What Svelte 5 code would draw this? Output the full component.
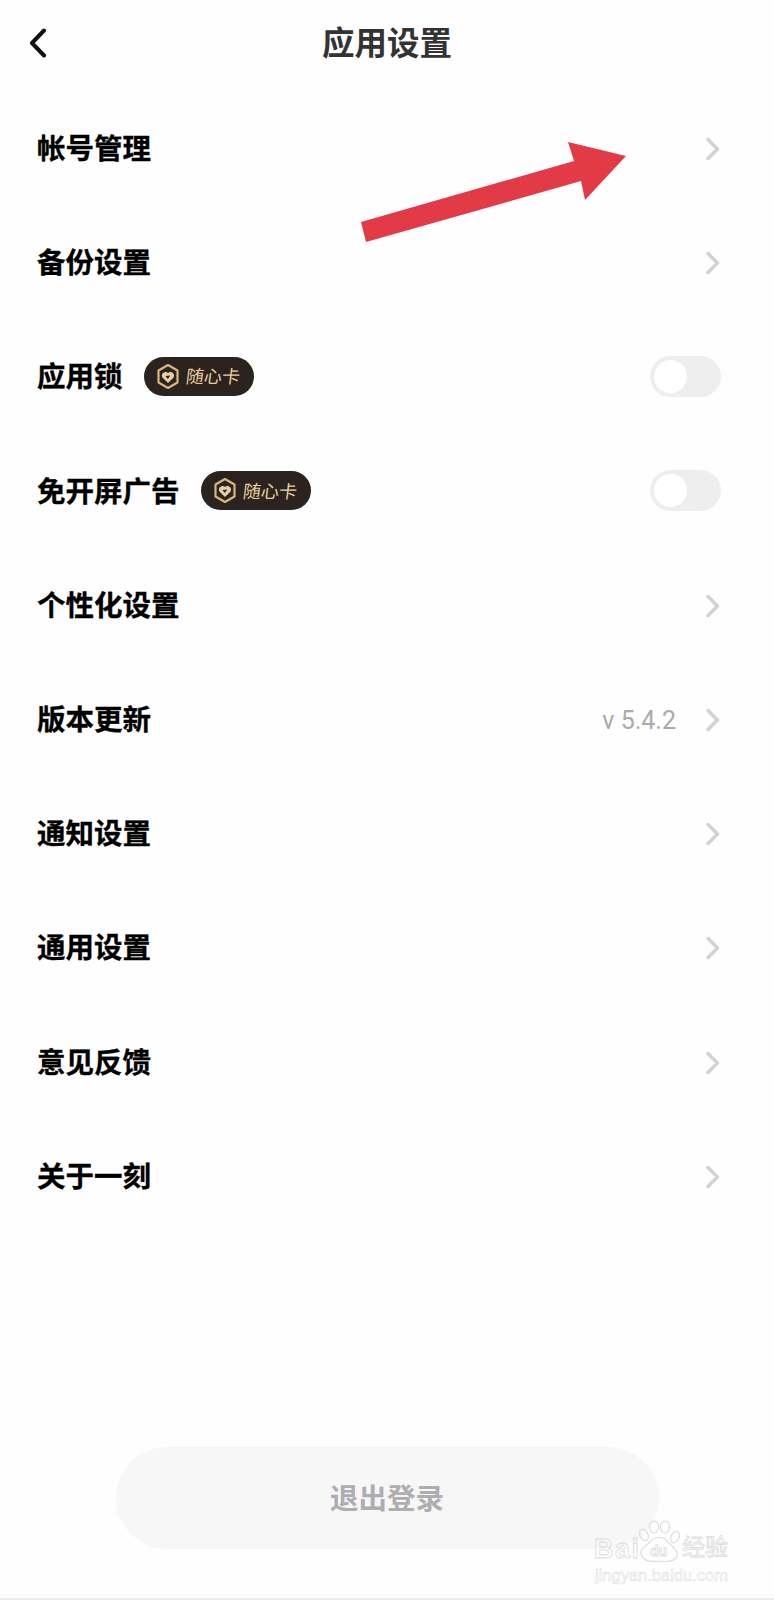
<script>
  const rows = [
    { label: "帐号管理", kind: "link" },
    { label: "备份设置", kind: "link" },
    { label: "应用锁", kind: "switch" },
    { label: "免开屏广告", kind: "switch" },
    { label: "个性化设置", kind: "link" },
    { label: "版本更新", kind: "link", value: "v 5.4.2" },
    { label: "通知设置", kind: "link" },
    { label: "通用设置", kind: "link" },
    { label: "意见反馈", kind: "link" },
    { label: "关于一刻", kind: "link" },
  ];
</script>

<div class="page">
  <header class="header">
    <svg class="back" width="20" height="30" viewBox="0 0 20 30">
      <path d="M16 2.5 L4 15 L16 27.5" />
    </svg>
    <h1>应用设置</h1>
  </header>

  <ul class="list">
    {#each rows as row}
      <li class="row">
        <span class="label">{row.label}</span>
        {#if row.kind === "switch"}
          <span class="badge">
            <svg width="24" height="27" viewBox="0 0 24 27">
              <path class="hex" d="M12 2 L21.5 7.5 V19.5 L12 25 L2.5 19.5 V7.5 Z" />
              <path class="blob" d="M12 20 L6.4 14.4 C4.4 10.6 9.4 7.4 12 10 C14.6 7.4 19.6 10.6 17.6 14.4 Z" />
              <path class="heart" d="M9.4 13 L14.4 12.4 L11.8 16 Z" />
            </svg>
            <span class="badge-text">随心卡</span>
          </span>
          <span class="switch"><span class="knob"></span></span>
        {:else}
          {#if row.value}<span class="value">{row.value}</span>{/if}
          <svg class="chevron" class:solo={!row.value} width="16" height="24" viewBox="0 0 16 24">
            <path d="M3 2.5 L12.5 12 L3 21.5" />
          </svg>
        {/if}
      </li>
    {/each}
  </ul>

  <button class="logout"><span class="logout-text">退出登录</span></button>

  <!-- annotation pasted on top of the screenshot -->
  <svg class="arrow" width="774" height="260" viewBox="0 0 774 260">
    <polygon points="361,222 574,161 568,142 626,156 585,200 581,181 366,242" />
  </svg>

  <div class="watermark">
    <svg class="paw" width="50" height="44" viewBox="0 0 50 44">
      <ellipse cx="8" cy="15" rx="4" ry="6" transform="rotate(-25 8 15)" />
      <ellipse cx="18" cy="7" rx="4.5" ry="6" />
      <ellipse cx="29" cy="7" rx="4.5" ry="6" />
      <ellipse cx="39" cy="17" rx="4" ry="6" transform="rotate(25 39 17)" />
      <path d="M6 36 C2 30 10 26 14 22 C18 16 28 16 32 22 C36 27 43 30 41 36 C39 42 30 42 23 41 C15 42 8 41 6 36 Z" />
    </svg>
    <div class="wm-bai">Bai</div>
    <div class="wm-du">du</div>
    <div class="wm-cn">经验</div>
    <div class="wm-url">jingyan.baidu.com</div>
  </div>
</div>

<style>
  :global(body) {
    background: #fff;
  }
  .page {
    position: relative;
    display: flex;
    flex-direction: column;
    box-sizing: border-box;
    height: 1600px;
    padding-bottom: 49px;
    background: #fefefe;
    border-bottom: 2px solid #ececec;
    font-family: "Noto Sans CJK SC", "Liberation Sans", sans-serif;
    overflow: hidden;
  }
  .header {
    position: relative;
    height: 86px;
    margin-bottom: 6px;
    display: flex;
    align-items: center;
    justify-content: center;
  }
  .back {
    position: absolute;
    left: 28px;
    top: 28px;
  }
  .back path {
    fill: none;
    stroke: #111;
    stroke-width: 4;
    stroke-linecap: round;
    stroke-linejoin: round;
  }
  h1 {
    margin: 0 0 5px;
    font-size: 32.5px;
    font-weight: 700;
    color: #333;
  }
  .list {
    margin: 0;
    padding: 0 53px 0 37px;
    list-style: none;
  }
  .row {
    display: flex;
    align-items: center;
    height: 114.2px;
  }
  .label {
    padding-bottom: 5px;
    font-size: 28.5px;
    font-weight: 700;
    color: #000;
    -webkit-text-stroke: 0.3px #000;
  }
  .value {
    margin-left: auto;
    margin-right: 29px;
    font-family: Roboto, "Liberation Sans", sans-serif;
    font-size: 25px;
    color: #aaa;
  }
  .chevron {
    flex: none;
  }
  .chevron.solo {
    margin-left: auto;
  }
  .chevron path {
    fill: none;
    stroke: #d2d2d2;
    stroke-width: 3.5;
    stroke-linecap: round;
    stroke-linejoin: round;
  }
  .badge {
    display: flex;
    align-items: center;
    gap: 6px;
    height: 39px;
    width: 110px;
    box-sizing: border-box;
    margin: 0 0 2px 21px;
    padding-left: 12px;
    border-radius: 20px;
    background: #2a2320;
  }
  .hex {
    fill: none;
    stroke: #d9b67c;
    stroke-width: 2.2;
    stroke-linejoin: round;
  }
  .blob {
    fill: #e9cf9f;
  }
  .heart {
    fill: #2a2320;
  }
  .badge-text {
    display: inline-block;
    padding-bottom: 2px;
    font-size: 18px;
    color: #e8cd9c;
    transform: skewX(-7deg);
    white-space: nowrap;
  }
  .switch {
    display: flex;
    align-items: center;
    margin: 0 0 2px auto;
    width: 71px;
    height: 41px;
    box-sizing: border-box;
    padding-left: 4px;
    border-radius: 21px;
    background: #eeeeee;
  }
  .knob {
    width: 33px;
    height: 33px;
    border-radius: 50%;
    background: #fff;
  }
  .logout {
    margin: auto auto 0;
    width: 543px;
    height: 102px;
    padding: 0 0 4px;
    border: 0;
    border-radius: 51px;
    background: #f7f7f8;
    font-family: inherit;
    font-size: 28.5px;
    font-weight: 700;
    color: #aeaeb2;
  }
  .arrow {
    position: absolute;
    left: 0;
    top: 0;
  }
  .arrow polygon {
    fill: #e33a48;
  }
  .watermark {
    position: absolute;
    left: 592px;
    top: 1520px;
    width: 150px;
    height: 64px;
    color: transparent;
    font-family: "Liberation Sans", "Noto Sans CJK SC", sans-serif;
    -webkit-text-stroke: 0.8px #dcdcdc;
  }
  .paw {
    position: absolute;
    left: 44px;
    top: 0;
  }
  .paw ellipse,
  .paw path {
    fill: none;
    stroke: #dcdcdc;
    stroke-width: 1.2;
  }
  .wm-bai {
    position: absolute;
    left: 2px;
    top: 14px;
    font-size: 27px;
    letter-spacing: 1.5px;
    font-weight: 700;
  }
  .wm-du {
    position: absolute;
    left: 58px;
    top: 23px;
    font-size: 14px;
    font-weight: 700;
  }
  .wm-cn {
    position: absolute;
    left: 90px;
    top: 8px;
    font-family: "Noto Sans CJK SC", sans-serif;
    font-size: 23px;
    white-space: nowrap;
  }
  .wm-url {
    position: absolute;
    left: 3px;
    top: 46px;
    font-size: 16.5px;
    white-space: nowrap;
    -webkit-text-stroke-width: 0.5px;
  }
</style>
